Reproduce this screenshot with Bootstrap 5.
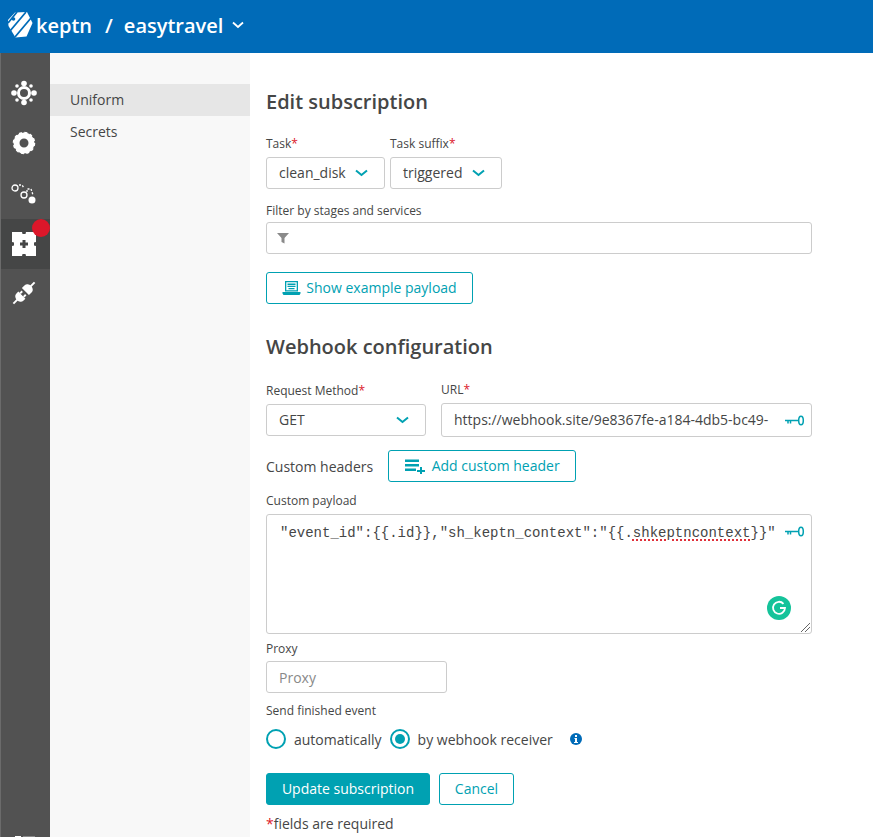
<!DOCTYPE html>
<html lang="en">
<head>
  <meta charset="utf-8">
  <title>keptn – Edit subscription</title>
  <meta name="viewport" content="width=device-width, initial-scale=1">
  <link href="https://cdn.jsdelivr.net/npm/bootstrap@5.3.2/dist/css/bootstrap.min.css" rel="stylesheet">
  <style>
    html, body { height: 837px; overflow: hidden; }
    body { font-family: "Open Sans", "Liberation Sans", sans-serif; font-size: 14px; color: #454646; background: #fff; }
    .top-bar { height: 53px; background: #006bb8; color: #fff; padding: 0 0 3px 7px; }
    .brand-logo { margin-right: 3px; }
    .brand-name { font-size: 20px; font-weight: 600; line-height: 27px; }
    .brand-slash { margin: 0 11px 0 13px; }
    .page-body { height: 784px; }
    .side-rail { width: 50px; background: #525252; border-left: 1px solid #6b6b6b; padding-top: 16px; }
    .rail-item { height: 50px; width: 49px; position: relative; padding: 0 3px 2px 0; }
    .rail-item.is-active { background: #454646; padding-bottom: 0; }
    .rail-dot { position: absolute; top: 0; right: 0; width: 18px; height: 18px; border-radius: 50%; background: #dc172a; }
    .rail-foot { height: 1px; padding-left: 14px; gap: 2px; }
    .rail-foot span { height: 1px; width: 6px; background: #fff; }
    .rail-foot span + span { width: 12px; background: #8a8a8a; }
    .sub-nav { width: 200px; background: #f8f8f8; padding-top: 31px; }
    .sub-link { display: block; height: 32px; line-height: 32px; padding-left: 20px; color: #454646; text-decoration: none; }
    .sub-link.is-active { background: #e6e6e6; }
    .edit-pane { width: 562px; padding: 35px 0 0 16px; }
    .edit-pane h1 { font-size: 20px; font-weight: 600; line-height: 27px; margin: 0; color: #454646; }
    .field-label { display: block; font-size: 12px; line-height: 16px; margin: 0 0 5px; }
    .req { color: #dc172a; }
    .fake-select, .text-box { height: 32px; border: 1px solid #ccc; border-radius: 3px; background: #fff; color: #454646; font-size: 14px; line-height: 30px; padding: 0 12px; box-shadow: none; }
    .fake-select { display: flex; align-items: center; justify-content: space-between; padding-right: 16px; }
    .text-box::placeholder { color: #898989; }
    .btn-ghost, .btn-solid { height: 32px; border-radius: 3px; font-size: 14px; line-height: 30px; padding: 0; display: inline-flex; align-items: center; justify-content: center; }
    .btn-ghost { border: 1px solid #00a1b2; color: #00a1b2; background: #fff; }
    .btn-solid { border: 1px solid #00a1b2; color: #fff; background: #00a1b2; }
    .task-row { gap: 5px; margin: 21px 0 14px; }
    .filter-label { margin-bottom: 3px; }
    .filter-box { width: 546px; margin-bottom: 18px; padding-left: 10px; }
    .webhook-title { margin: 29px 0 19px !important; }
    .method-row { gap: 15px; }
    .url-box { width: 371px; height: 34px; display: flex; align-items: center; justify-content: space-between; padding: 0 6px 0 12px; }
    .header-row { gap: 15px; margin: 13px 0 11px; }
    .payload-box { width: 546px; height: 120px; position: relative; border: 1px solid #ccc; border-radius: 3px; }
    .payload-code { position: absolute; top: 9px; left: 13px; font-family: "Liberation Mono", "DejaVu Sans Mono", monospace; font-size: 14px; line-height: 18px; white-space: nowrap; color: #454646; }
    .spell-err { text-decoration: underline dotted #e0303a 2px; text-underline-offset: 2px; }
    .key-icon { position: absolute; top: 11px; right: 6px; }
    .grammar-badge { position: absolute; right: 20px; bottom: 13px; width: 24px; height: 24px; border-radius: 50%; background: #15c39a; display: flex; align-items: center; justify-content: center; }
    .resize-grip { position: absolute; right: 1px; bottom: 1px; }
    .proxy-label { margin: 7px 0 4px; }
    .finish-label { margin: 9px 0 8px; padding-top: 1px; }
    .radio-row { height: 24px; }
    .radio-ring { width: 20px; height: 20px; border: 2px solid #00a1b2; border-radius: 50%; display: flex; align-items: center; justify-content: center; flex: none; }
    .radio-ring.is-on::after { content: ""; width: 10px; height: 10px; border-radius: 50%; background: #00a1b2; }
    .action-row { gap: 9px; margin-top: 22px; }
    .required-note { margin: 8px 0 0; }
    .info-dot { margin-left: 17px; }
  </style>
</head>
<body>

<header class="top-bar d-flex align-items-center">
  <svg class="brand-logo" width="26" height="28" viewBox="0 0 26 28">
    <path fill="#fff" d="M8 1.500 20 1l5.500 11-6 13.500-11 1L1.500 15 1 9z"/>
    <path stroke="#006bb8" stroke-width="1.800" d="M3 20 19 1M8 26 24 7M1 12 10 1"/>
    <circle cx="6.500" cy="8" r="1.800" fill="#006bb8"/>
  </svg>
  <span class="brand-name">keptn</span>
  <span class="brand-name brand-slash">/</span>
  <span class="brand-name">easytravel</span>
  <svg width="12" height="8" viewBox="0 0 12 8" style="margin-left:9px"><path d="M1 1.500 6 6l5-4.500" fill="none" stroke="#fff" stroke-width="1.800"/></svg>
</header>

<div class="page-body d-flex">
  <nav class="side-rail d-flex flex-column">
    <div class="rail-item d-flex align-items-center justify-content-center">
      <svg width="26" height="26" viewBox="0 0 26 26" fill="#fff">
        <circle cx="13" cy="13" r="5.500" fill="none" stroke="#fff" stroke-width="3"/>
        <circle cx="13" cy="3.500" r="2.800"/><circle cx="13" cy="22.500" r="2.800"/>
        <circle cx="3" cy="13" r="2.800"/><circle cx="23" cy="13" r="2.800"/>
        <circle cx="6" cy="6" r="1.800"/><circle cx="20" cy="6" r="1.800"/><circle cx="6" cy="20" r="1.800"/><circle cx="20" cy="20" r="1.800"/>
      </svg>
    </div>
    <div class="rail-item d-flex align-items-center justify-content-center">
      <svg width="24" height="24" viewBox="0 0 24 24"><circle cx="12" cy="12" r="7.500" fill="none" stroke="#fff" stroke-width="6"/><circle cx="12" cy="12" r="10.500" fill="none" stroke="#fff" stroke-width="1.500" stroke-dasharray="3 2.500"/></svg>
    </div>
    <div class="rail-item d-flex align-items-center justify-content-center">
      <svg width="26" height="24" viewBox="0 0 26 24" fill="none" stroke="#fff" stroke-width="1.300">
        <circle cx="4" cy="7" r="3"/><circle cx="13" cy="14" r="3"/>
        <path d="M8 4h3l2 3M16 11V8h4l2 6" stroke-dasharray="2 1.500"/>
        <circle cx="21" cy="19" r="3.500" fill="#fff" stroke="none"/>
      </svg>
    </div>
    <div class="rail-item is-active d-flex align-items-center justify-content-center">
      <span class="rail-dot"></span>
      <svg width="24" height="24" viewBox="0 0 24 24" fill="#fff"><path fill-rule="evenodd" d="M0 0h10l.5 2h3l.5-2h10v10l-2 .5v3l2 .5v10H14l-.5-2h-3l-.5 2H0V14l2-.5v-3L0 10zM10.500 8v2.500H8v3h2.500V16h3v-2.500H16v-3h-2.500V8z"/></svg>
    </div>
    <div class="rail-item d-flex align-items-center justify-content-center">
      <svg width="26" height="26" viewBox="0 0 26 26" fill="#fff">
        <g transform="rotate(45 13 13)">
          <path d="M8 11V7a5 4 0 0 1 10 0v4z"/><path d="M12 -2h2v6h-2z"/>
          <path d="M8 16h10v3a5 4 0 0 1-10 0z"/><path d="M12 21h2v7h-2z"/>
          <path d="M9.500 13h2v3h-2zM14.500 13h2v3h-2z"/>
        </g>
      </svg>
    </div>
    <div class="rail-foot d-flex mt-auto"><span></span><span></span></div>
  </nav>

  <aside class="sub-nav">
    <a class="sub-link is-active" href="#">Uniform</a>
    <a class="sub-link" href="#">Secrets</a>
  </aside>

  <main class="edit-pane">
    <h1>Edit subscription</h1>
    <div class="d-flex task-row">
      <div>
        <label class="field-label">Task<span class="req">*</span></label>
        <div class="fake-select" style="width:119px">clean_disk <svg width="13" height="8" viewBox="0 0 13 8"><path d="M1 1.500 6.500 6 12 1.500" fill="none" stroke="#00a1b2" stroke-width="2"/></svg></div>
      </div>
      <div>
        <label class="field-label">Task suffix<span class="req">*</span></label>
        <div class="fake-select" style="width:112px">triggered <svg width="13" height="8" viewBox="0 0 13 8"><path d="M1 1.500 6.500 6 12 1.500" fill="none" stroke="#00a1b2" stroke-width="2"/></svg></div>
      </div>
    </div>
    <label class="field-label filter-label">Filter by stages and services</label>
    <div class="text-box filter-box d-flex align-items-center">
      <svg width="12" height="12" viewBox="0 0 12 12"><path fill="#8a8a8a" d="M0 1h12L7.500 6v5.500L4.500 10V6z"/></svg>
    </div>
    <button class="btn-ghost" style="width:207px;gap:5px" type="button">
      <svg width="19" height="14" viewBox="0 0 18 14" fill="#00a1b2"><path fill-rule="evenodd" d="M2.500 0h13v10.500h-13zM3.800 1.300v8h10.400v-8z"/><path d="M5 2.500h8v1.400H5zM5 4.700h8v1.400H5zM6 6.900h6v1.400H6zM0 11h18v1.500l-1 1.500H1l-1-1.500z"/></svg>
      Show example payload
    </button>

    <h1 class="webhook-title">Webhook configuration</h1>
    <div class="d-flex method-row">
      <div class="pt-1">
        <label class="field-label">Request Method<span class="req">*</span></label>
        <div class="fake-select" style="width:160px">GET <svg width="13" height="8" viewBox="0 0 13 8"><path d="M1 1.500 6.500 6 12 1.500" fill="none" stroke="#00a1b2" stroke-width="2"/></svg></div>
      </div>
      <div>
        <label class="field-label" style="margin-top:3px">URL<span class="req">*</span></label>
        <div class="text-box url-box">https://webhook.site/9e8367fe-a184-4db5-bc49-
          <svg width="20" height="11" viewBox="0 0 20 11" fill="none" stroke="#00a1b2" stroke-width="1.500"><ellipse cx="16" cy="5.500" rx="2.300" ry="4.300"/><path d="M0 5.500h13M3 5.500v3M5.500 5.500v3"/></svg>
        </div>
      </div>
    </div>
    <div class="d-flex align-items-center header-row">
      <span>Custom headers</span>
      <button class="btn-ghost" style="width:188px;gap:7px" type="button">
        <svg width="20" height="15" viewBox="0 0 20 15" fill="#00a1b2"><path d="M0 .5h14V3H0zM0 5h14v2.500H0zM0 9.500h11V12H0zM15 8h2v3h3v2h-3v2h-2v-2h-3v-2h3z"/></svg>
        Add custom header
      </button>
    </div>
    <label class="field-label">Custom payload</label>
    <div class="payload-box">
      <span class="payload-code">"event_id":{{.id}},"sh_keptn_context":"{{.<span class="spell-err">shkeptncontext</span>}}"</span>
      <svg class="key-icon" width="20" height="11" viewBox="0 0 20 11" fill="none" stroke="#00a1b2" stroke-width="1.500"><ellipse cx="16" cy="5.500" rx="2.300" ry="4.300"/><path d="M0 5.500h13M3 5.500v3M5.500 5.500v3"/></svg>
      <span class="grammar-badge"><svg width="16" height="16" viewBox="0 0 16 16" fill="none" stroke="#fff" stroke-width="1.800"><path d="M12.500 3.800A6 6 0 1 0 14 8H9"/></svg></span>
      <svg class="resize-grip" width="9" height="9" viewBox="0 0 9 9" stroke="#666"><path d="M0 9 9 0M4 9l5-5"/></svg>
    </div>
    <label class="field-label proxy-label">Proxy</label>
    <input class="form-control text-box" style="width:181px" placeholder="Proxy">
    <label class="field-label finish-label">Send finished event</label>
    <div class="radio-row d-flex align-items-center">
      <span class="radio-ring me-2"></span><span class="me-2">automatically</span>
      <span class="radio-ring is-on me-2"></span><span>by webhook receiver</span>
      <svg class="info-dot" width="12" height="12" viewBox="0 0 12 12"><circle cx="6" cy="6" r="6" fill="#006bb8"/><path fill="#fff" d="M5 2h2v2H5zM4.500 5H7v4h1v1H4V9h1V6h-.5z"/></svg>
    </div>
    <div class="d-flex action-row">
      <button class="btn-solid" style="width:164px" type="button">Update subscription</button>
      <button class="btn-ghost" style="width:75px" type="button">Cancel</button>
    </div>
    <p class="required-note"><span class="req">*</span>fields are required</p>
  </main>
</div>

</body>
</html>
